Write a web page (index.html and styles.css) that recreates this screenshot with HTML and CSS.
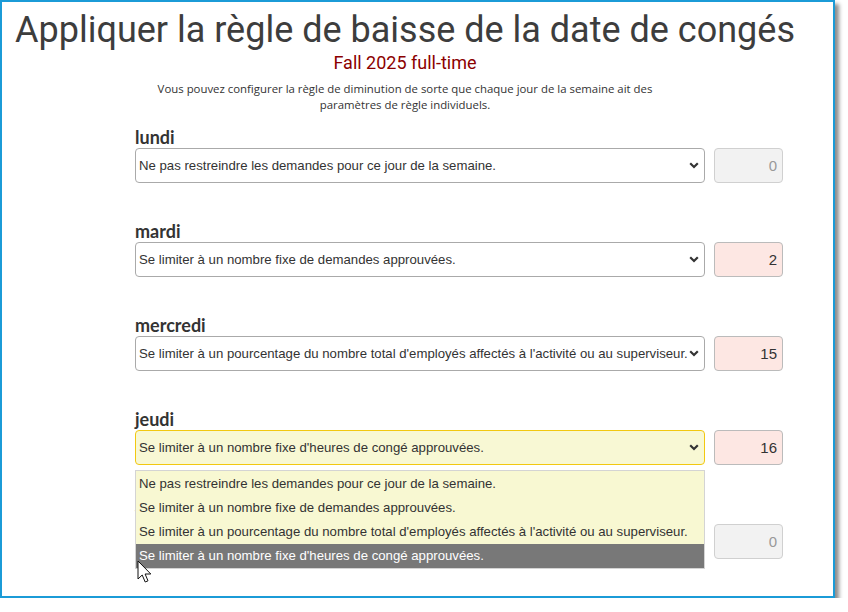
FILE: index.html
```html
<!DOCTYPE html>
<html lang="fr">
<head>
    <meta charset="UTF-8">
    <meta name="viewport" content="width=device-width, initial-scale=1.0">
    <title>Règle de baisse de la date de congés</title>
    <link rel="stylesheet" href="styles.css">
</head>
<body>
    <div class="frame">
        <div class="page">
            <h1 class="title">Appliquer la règle de baisse de la date de congés</h1>
            <div class="subtitle">Fall 2025 full-time</div>
            <p class="intro">Vous pouvez configurer la règle de diminution de sorte que chaque jour de la semaine ait des paramètres de règle individuels.</p>

            <div class="rules">
                <div class="day-rule">
                    <div class="day-name">lundi</div>
                    <div class="day-fields">
                        <div class="select-box">
                            <span class="select-text">Ne pas restreindre les demandes pour ce jour de la semaine.</span>
                            <svg class="chevron" width="10" height="7" viewBox="0 0 10 7"><path d="M1.2 1.2 L5 5 L8.8 1.2" fill="none" stroke="#333" stroke-width="2.2"/></svg>
                        </div>
                        <div class="num-box disabled">0</div>
                    </div>
                </div>

                <div class="day-rule">
                    <div class="day-name">mardi</div>
                    <div class="day-fields">
                        <div class="select-box">
                            <span class="select-text">Se limiter à un nombre fixe de demandes approuvées.</span>
                            <svg class="chevron" width="10" height="7" viewBox="0 0 10 7"><path d="M1.2 1.2 L5 5 L8.8 1.2" fill="none" stroke="#333" stroke-width="2.2"/></svg>
                        </div>
                        <div class="num-box">2</div>
                    </div>
                </div>

                <div class="day-rule">
                    <div class="day-name">mercredi</div>
                    <div class="day-fields">
                        <div class="select-box">
                            <span class="select-text">Se limiter à un pourcentage du nombre total d'employés affectés à l'activité ou au superviseur.</span>
                            <svg class="chevron" width="10" height="7" viewBox="0 0 10 7"><path d="M1.2 1.2 L5 5 L8.8 1.2" fill="none" stroke="#333" stroke-width="2.2"/></svg>
                        </div>
                        <div class="num-box">15</div>
                    </div>
                </div>

                <div class="day-rule">
                    <div class="day-name">jeudi</div>
                    <div class="day-fields">
                        <div class="select-wrap">
                            <div class="select-box focused">
                                <span class="select-text">Se limiter à un nombre fixe d'heures de congé approuvées.</span>
                                <svg class="chevron" width="10" height="7" viewBox="0 0 10 7"><path d="M1.2 1.2 L5 5 L8.8 1.2" fill="none" stroke="#333" stroke-width="2.2"/></svg>
                            </div>
                            <ul class="option-list">
                                <li>Ne pas restreindre les demandes pour ce jour de la semaine.</li>
                                <li>Se limiter à un nombre fixe de demandes approuvées.</li>
                                <li>Se limiter à un pourcentage du nombre total d'employés affectés à l'activité ou au superviseur.</li>
                                <li class="hovered">Se limiter à un nombre fixe d'heures de congé approuvées.</li>
                            </ul>
                            <!-- pointeur de la souris -->
                            <svg class="cursor" width="16" height="24" viewBox="0 0 16 24"><path d="M1 1 L1 19 L5.2 15 L8.2 22 L11 20.8 L8.1 14 L13.8 14 Z" fill="#fff" stroke="#111" stroke-width="1" stroke-linejoin="miter"/></svg>
                        </div>
                        <div class="num-box">16</div>
                    </div>
                </div>

                <div class="day-rule">
                    <div class="day-name">vendredi</div>
                    <div class="day-fields">
                        <div class="select-box">
                            <span class="select-text">Ne pas restreindre les demandes pour ce jour de la semaine.</span>
                            <svg class="chevron" width="10" height="7" viewBox="0 0 10 7"><path d="M1.2 1.2 L5 5 L8.8 1.2" fill="none" stroke="#333" stroke-width="2.2"/></svg>
                        </div>
                        <div class="num-box disabled">0</div>
                    </div>
                </div>
            </div>
        </div>
    </div>
</body>
</html>
```

FILE: styles.css
```css
body {
    margin: 0;
    padding: 0;
    background-color: #fff;
    font-family: "Liberation Sans", Arial, sans-serif;
}
.frame {
    width: 831px;
    height: 594px;
    border: 2px solid #1b9bd7;
    background: #fff;
    box-shadow: 4px 4px 4px rgba(0, 0, 0, 0.45);
    overflow: hidden;
}
.page {
    width: 806px;
}
.title {
    margin: 6px 0 0 0;
    font-family: Roboto, sans-serif;
    font-size: 36px;
    font-weight: normal;
    color: #3d3d3d;
    text-align: center;
    white-space: nowrap;
    line-height: 44px;
}
.subtitle {
    font-family: Roboto, sans-serif;
    font-size: 18px;
    color: #8b0000;
    text-align: center;
    line-height: 22px;
}
.intro {
    width: 530px;
    margin: 7px auto 0 auto;
    font-family: "Open Sans", sans-serif;
    font-size: 11.4px;
    line-height: 16px;
    color: #333;
    text-align: center;
}
.rules {
    margin-left: 133px;
    margin-top: 13px;
}
.day-rule {
    height: 94px;
}
.day-name {
    font-family: Lato, sans-serif;
    font-weight: bold;
    font-size: 18px;
    line-height: 22px;
    color: #333;
}
.day-fields {
    display: flex;
    gap: 9px;
}
.select-wrap {
    position: relative;
}
.select-box {
    width: 570px;
    height: 35px;
    box-sizing: border-box;
    border: 1px solid #aaa;
    border-radius: 4px;
    background: #fff;
    display: flex;
    align-items: center;
    justify-content: space-between;
    padding: 0 5px 0 3px;
    font-size: 13.2px;
    color: #333;
}
.select-box.focused {
    background: #f8f8d4;
    border-color: #f2c811;
}
.select-text {
    white-space: nowrap;
    overflow: hidden;
}
.chevron {
    flex-shrink: 0;
    margin-left: 2px;
}
.num-box {
    width: 69px;
    height: 35px;
    box-sizing: border-box;
    border: 1px solid #bbb;
    border-radius: 4px;
    background: #fde7e3;
    padding-right: 5px;
    font-size: 15px;
    line-height: 33px;
    text-align: right;
    color: #333;
}
.num-box.disabled {
    background: #f2f2f2;
    border-color: #d0d0d0;
    color: #999;
}
/* liste déroulante ouverte */
.option-list {
    position: absolute;
    top: 40px;
    left: 0;
    width: 570px;
    box-sizing: border-box;
    margin: 0;
    padding: 1px 0 0 0;
    list-style: none;
    background: #f8f8d2;
    border: 1px solid #d4d4d4;
    z-index: 2;
}
.option-list li {
    height: 24px;
    line-height: 24px;
    padding-left: 3px;
    font-size: 13.2px;
    color: #333;
    white-space: nowrap;
}
.option-list li.hovered {
    background: #787878;
    color: #fff;
}
.cursor {
    position: absolute;
    left: 2px;
    top: 130px;
    z-index: 3;
}
```
